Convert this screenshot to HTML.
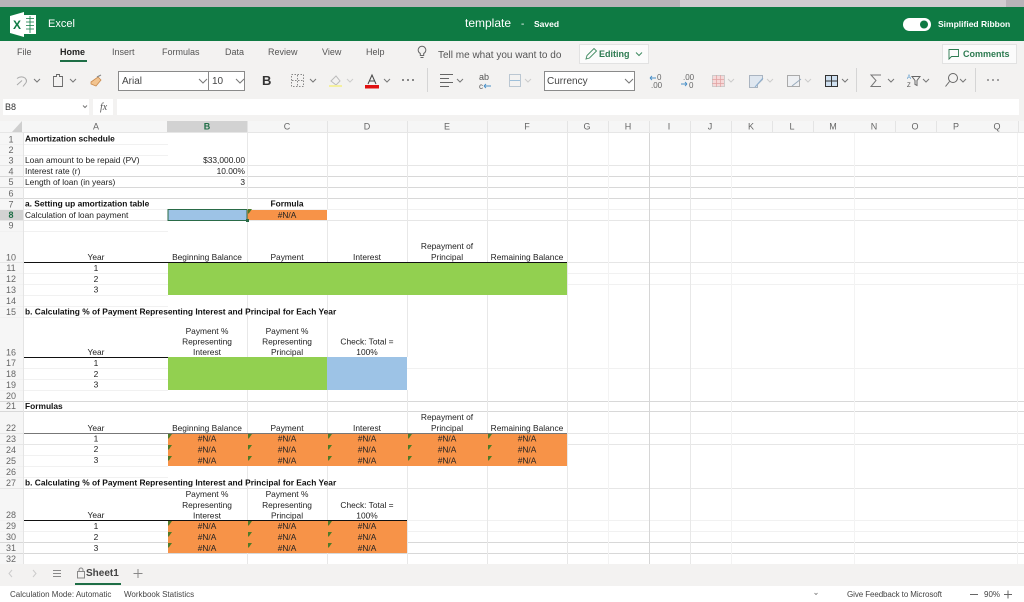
<!DOCTYPE html>
<html><head><meta charset="utf-8"><title>Excel</title>
<style>
html,body{margin:0;padding:0;background:#fff;overflow:hidden}
svg{display:block;position:absolute;left:0;top:0;filter:blur(.3px)}
text{font-family:"Liberation Sans",sans-serif}
.c{font-size:8.4px;fill:#222}
.m{text-anchor:middle}
.r{text-anchor:end}
.b{font-weight:bold;fill:#111}
.h{font-size:9px;fill:#666;text-anchor:middle}
.ic{fill:none;stroke:#666;stroke-width:1}
.ch{fill:none;stroke:#777;stroke-width:1}
</style></head><body>
<svg width="1024" height="602" viewBox="0 0 1024 602" xmlns="http://www.w3.org/2000/svg">
<defs>
<polygon id="t" points="0,0 4,0 0.8,4.5 0,4.5" fill="#4f7a28"/>
</defs>
<rect width="1024" height="602" fill="#fff"/>
<!-- top strip -->
<rect width="1024" height="7" fill="#b8b3b8"/>
<rect x="680" width="326" height="7" fill="#d0ccd0"/>
<!-- title bar -->
<rect y="7" width="1024" height="34" fill="#0e7a43"/>
<polygon points="10,16 24,12 24,37 10,33" fill="#fff"/>
<rect x="24" y="15" width="12" height="19" fill="#fff"/>
<path d="M26 18.500h8M26 22h8M26 25.500h8M26 29h8M30 16v17" stroke="#0e7a43" stroke-width=".8" fill="none"/>
<text x="17" y="29" font-size="12" font-weight="bold" fill="#0e7a43" text-anchor="middle">X</text>
<text x="48" y="27" font-size="11" fill="#fff">Excel</text>
<text x="465" y="27" font-size="12" fill="#fff">template</text>
<text x="521" y="27" font-size="10" fill="#fff">-</text>
<text x="534" y="27" font-size="8.500" font-weight="bold" fill="#fff">Saved</text>
<rect x="903" y="18" width="28" height="13" rx="6.500" fill="#fff"/>
<circle cx="924" cy="24.500" r="4" fill="#0e7a43"/>
<text x="938" y="27" font-size="8.500" font-weight="bold" fill="#fff">Simplified Ribbon</text>
<!-- ribbon -->
<rect y="41" width="1024" height="80" fill="#f3f2f1"/>
<g font-size="9" fill="#555">
<text x="17" y="55">File</text>
<text x="60" y="55" fill="#222" font-weight="bold">Home</text>
<text x="112" y="55">Insert</text>
<text x="162" y="55">Formulas</text>
<text x="225" y="55">Data</text>
<text x="268" y="55">Review</text>
<text x="322" y="55">View</text>
<text x="366" y="55">Help</text>
<text x="438" y="58" font-size="10">Tell me what you want to do</text>
</g>
<rect x="60" y="60" width="27" height="2" fill="#1e6e46"/>
<path d="M425.700 55.500a3.800 3.800 0 1 0-3.400 0v2h3.400zM422.500 59.500h3" class="ic" stroke-width=".8" transform="translate(-2,-2)"/>
<!-- editing -->
<rect x="579.500" y="44.500" width="69" height="19" fill="#fbfbfb" stroke="#e2e2e2"/>
<path d="M586 59l1-3.500 7-7 2.500 2.500-7 7z" fill="none" stroke="#3f8a60" stroke-width=".9"/>
<text x="599" y="57" font-size="9" font-weight="bold" fill="#2c7a50">Editing</text>
<path d="M636 52.500l3 3 3-3" fill="none" stroke="#3f8a60"/>
<!-- comments -->
<rect x="942.500" y="44.500" width="74" height="19" fill="#fbfbfb" stroke="#e2e2e2"/>
<path d="M949 49.500h9.500v7h-7l-2.500 2.500z" fill="none" stroke="#2c7a50" stroke-width=".9"/>
<text x="963" y="57" font-size="9" font-weight="bold" fill="#2c7a50">Comments</text>
<!-- toolbar icons left -->
<path d="M17 85l5-4.500M17 78.500q4-3 8-.5q3 3 0 6l-2 2.500" fill="none" stroke="#aaa" stroke-width="1"/>
<path d="M34 79l3 3 3-3M70 79l3 3 3-3" class="ch"/>
<path d="M53.500 76.500h3v-2h3v2h3v10h-9z" fill="none" stroke="#666" stroke-width=".9"/>
<path d="M91 82l7-5 3 3-5 6-5-2z" fill="#f3c48f" stroke="#c98a4e" stroke-width=".8"/>
<path d="M97 77l4-2" stroke="#888" stroke-width="1.200"/>
<!-- font select -->
<rect x="118.500" y="71.500" width="126" height="19" fill="#fff" stroke="#8a8a8a"/>
<line x1="208.500" y1="71" x2="208.500" y2="91" stroke="#8a8a8a"/>
<text x="122" y="84" font-size="10" fill="#444">Arial</text>
<text x="212" y="84" font-size="10" fill="#444">10</text>
<path d="M199 79l4 4 4-4M236 79l4 4 4-4" class="ch"/>
<text x="262" y="85" font-size="13" font-weight="bold" fill="#333">B</text>
<rect x="291.500" y="74.500" width="12" height="12" fill="none" stroke="#888" stroke-dasharray="1.500 1.500"/>
<path d="M297.500 75v12M292 80.500h12" stroke="#888" stroke-dasharray="1.500 1.500"/>
<path d="M310 79l3 3 3-3" class="ch"/>
<path d="M331 81l5-5 4 5-4 4z" fill="none" stroke="#bbb"/>
<rect x="329" y="85" width="13" height="2" fill="#f4f0a0"/>
<path d="M347 79l3 3 3-3" fill="none" stroke="#ccc"/>
<path d="M368 84l4-9 4 9M369.500 81h5" fill="none" stroke="#444"/>
<rect x="365" y="85" width="14" height="3.500" fill="#e01010"/>
<path d="M384 79l3 3 3-3" class="ch"/>
<circle cx="403" cy="80" r="1" fill="#666"/><circle cx="408" cy="80" r="1" fill="#666"/><circle cx="413" cy="80" r="1" fill="#666"/>
<line x1="427.500" y1="68" x2="427.500" y2="92" stroke="#d5d5d5"/>
<path d="M440 74.500h13M440 78.500h9M440 82.500h13M440 86.500h9" stroke="#666"/>
<path d="M457 79l3 3 3-3" class="ch"/>
<text x="479" y="80" font-size="9" fill="#555">ab</text>
<text x="479" y="89" font-size="8" fill="#555">c</text>
<path d="M484 86h7M484 86l2-2M484 86l2 2" stroke="#4a90c8" fill="none" stroke-width=".9"/>
<rect x="509.500" y="74.500" width="11" height="12" fill="none" stroke="#bbc7d2"/>
<path d="M510 80.500h10" stroke="#9fc0da"/>
<path d="M525 79l3 3 3-3" fill="none" stroke="#ccc"/>
<!-- number format -->
<rect x="544.500" y="71.500" width="90" height="19" fill="#fff" stroke="#8a8a8a"/>
<text x="547" y="84" font-size="10" fill="#444">Currency</text>
<path d="M625 79l4 4 4-4" class="ch"/>
<text x="657" y="80" font-size="8" fill="#666">0</text>
<path d="M650 78h6M650 78l2-2M650 78l2 2" stroke="#4a90c8" fill="none" stroke-width=".9"/>
<text x="651" y="88" font-size="8" fill="#666">.00</text>
<text x="683" y="80" font-size="8" fill="#666">.00</text>
<path d="M681 84h6M687 84l-2-2M687 84l-2 2" stroke="#4a90c8" fill="none" stroke-width=".9"/>
<text x="689" y="88" font-size="8" fill="#666">0</text>
<rect x="712.500" y="75.500" width="12" height="11" fill="#f6d8d8" stroke="#ccc"/>
<path d="M716.500 75v12M720.500 75v12M712 79.500h12M712 83.500h12" stroke="#e0a0a0" stroke-width=".7"/>
<path d="M728 79l3 3 3-3" fill="none" stroke="#ccc"/>
<path d="M749.500 75.500h13v4l-5 5v3h-8z" fill="#dfe7f0" stroke="#aab4c0"/>
<path d="M755 87l8-9" stroke="#8fb0d0"/>
<path d="M767 79l3 3 3-3" fill="none" stroke="#ccc"/>
<rect x="787.500" y="75.500" width="12" height="11" fill="#eef0f3" stroke="#aaa"/>
<path d="M792 86l9-7" stroke="#9ab" fill="none"/>
<path d="M805 79l3 3 3-3" fill="none" stroke="#ccc"/>
<rect x="825.500" y="75.500" width="12" height="11" fill="#cfe0f0" stroke="#333"/>
<path d="M831.500 75v12M825 81h13" stroke="#333"/>
<path d="M842 79l3 3 3-3" class="ch"/>
<line x1="856.500" y1="68" x2="856.500" y2="92" stroke="#d5d5d5"/>
<path d="M881 75h-10l5 5.500-5 6h10" fill="none" stroke="#777"/>
<path d="M888 79l3 3 3-3" class="ch"/>
<text x="907" y="79" font-size="6" fill="#4a90c8">A</text>
<text x="907" y="87" font-size="6" fill="#444">Z</text>
<path d="M912 76.500h8l-3 4v5l-2-1v-4z" fill="none" stroke="#666"/>
<path d="M923 79l3 3 3-3" class="ch"/>
<circle cx="953" cy="78" r="4.500" class="ic"/>
<path d="M949.500 81.500l-4 5" stroke="#666"/>
<path d="M960 79l3 3 3-3" class="ch"/>
<line x1="975.500" y1="68" x2="975.500" y2="92" stroke="#d5d5d5"/>
<circle cx="988" cy="80" r=".9" fill="#666"/><circle cx="993" cy="80" r=".9" fill="#666"/><circle cx="998" cy="80" r=".9" fill="#666"/>
<!-- formula bar -->
<rect x="3" y="99" width="86" height="16" fill="#fff"/>
<text x="5" y="110" font-size="9" fill="#333">B8</text>
<path d="M83 105.500l2 2 2-2" class="ch" stroke-width=".8"/>
<rect x="93" y="99" width="20" height="16" fill="#fff"/>
<text x="100" y="110" font-size="10" font-style="italic" fill="#555" style="font-family:'Liberation Serif',serif">fx</text>
<rect x="117" y="99" width="902" height="16" fill="#fff"/>
<!-- column headers -->
<rect y="121" width="1024" height="12" fill="#f6f6f6"/>
<rect x="167" y="121" width="80" height="12" fill="#d2d2d2"/>
<rect x="167" y="132" width="80" height="1" fill="#1e6e46"/>
<polygon points="22,121 22,132 12,132" fill="#cfcfcf"/>
<path d="M247.500 121V133M327.500 121V133M407.500 121V133M487.500 121V133M567.500 121V133M608.500 121V133M649.500 121V133M690.500 121V133M731.500 121V133M772.500 121V133M813.500 121V133M895.500 121V133M936.500 121V133M1018.500 121V133" stroke="#e4e4e4"/>
<!-- row header bg -->
<rect y="133" width="24" height="431" fill="#f6f6f6"/>
<rect y="209" width="24" height="11" fill="#d2d2d2"/>
<rect x="23" y="209" width="1" height="11" fill="#1e6e46"/>
<!-- fills -->
<rect x="168" y="262" width="399" height="33" fill="#92d050"/>
<rect x="168" y="357" width="159" height="33" fill="#92d050"/>
<rect x="327" y="357" width="80" height="33" fill="#9dc3e6"/>
<rect x="247" y="209" width="80" height="11" fill="#f79348"/>
<rect x="168" y="433" width="399" height="33" fill="#f79348"/>
<rect x="168" y="520" width="239" height="33" fill="#f79348"/>
<!-- grid -->
<g fill="none" stroke-width="1">
<g stroke="#d8d8d8">
<path d="M0 176.500H1024M0 187.500H1024M0 198.500H1024M0 542.500H168M407 542.500H1024M0 553.500H1024M0 401.500H1024M0 411.500H1024"/>
</g>
<g stroke="#e6e6e6">
<path d="M0 220.500H1024M0 262.500H168M567 262.500H1024M0 433.500H168M567 433.500H1024M0 444.500H168M567 444.500H1024M0 488.500H1024M0 165.500H1024"/>
</g>
<g stroke="#f1f1f1">
<path d="M0 209.500H1024M0 273.500H168M567 273.500H1024M0 284.500H168M567 284.500H1024M0 368.500H168M407 368.500H1024M0 520.500H168M407 520.500H1024M0 531.500H168M407 531.500H1024M0 295.500H168M0 379.500H168M0 455.500H168M0 466.500H168M0 477.500H168M0 144.500H168M0 155.500H168M0 231.500H168M0 306.500H168M0 317.500H168M0 390.500H168"/>
</g>
<path d="M247.500 133V209M247.500 220V262M247.500 295V357M247.500 390V433M247.500 466V520M247.500 553V564M327.500 133V209M327.500 220V262M327.500 295V357M327.500 390V433M327.500 466V520M327.500 553V564M407.500 133V262M407.500 295V357M407.500 390V433M407.500 466V564M487.500 133V262M487.500 295V433M487.500 466V564M567.500 133V564M690.500 133V564" stroke="#e8e8e8"/>
<path d="M649.500 133V564" stroke="#d6d6d6"/>
<path d="M608.500 133V564M731.500 133V564M854.500 133V564M1017.500 133V564" stroke="#f3f3f3"/>
<path d="M0 132.500H1024" stroke="#e6e6e6"/>
<path d="M23.500 133V564" stroke="#e4e4e4"/>
</g>
<!-- black rules -->
<path d="M24 262.500H567M24 357.500H168M24 520.500H407" stroke="#111" stroke-width="1"/>
<path d="M24 433.500H567" stroke="#777" stroke-width="1"/>
<!-- selected cell -->
<rect x="168" y="209.500" width="79" height="11" fill="#9dc3e6" stroke="#2a6b47" stroke-width="1"/>
<rect x="246" y="219" width="3" height="3" fill="#2a6b47"/>
<use href="#t" x="248" y="209"/>
<!-- col labels -->
<g>
<text class="h" x="96" y="129.500">A</text><text class="h b" x="207" y="129.500" style="fill:#1e6e46">B</text><text class="h" x="287" y="129.500">C</text><text class="h" x="367" y="129.500">D</text><text class="h" x="447" y="129.500">E</text><text class="h" x="527" y="129.500">F</text><text class="h" x="587" y="129.500">G</text><text class="h" x="628" y="129.500">H</text><text class="h" x="669" y="129.500">I</text><text class="h" x="710" y="129.500">J</text><text class="h" x="751" y="129.500">K</text><text class="h" x="792" y="129.500">L</text><text class="h" x="833" y="129.500">M</text><text class="h" x="874" y="129.500">N</text><text class="h" x="915" y="129.500">O</text><text class="h" x="956" y="129.500">P</text><text class="h" x="997" y="129.500">Q</text>
</g>
<!-- row labels -->
<g>
<text class="h" x="11" y="142.500">1</text><text class="h" x="11" y="153">2</text><text class="h" x="11" y="163.500">3</text><text class="h" x="11" y="174.500">4</text><text class="h" x="11" y="185">5</text><text class="h" x="11" y="196.500">6</text><text class="h" x="11" y="207.500">7</text><text class="h b" x="11" y="218" style="fill:#1e6e46">8</text><text class="h" x="11" y="228.500">9</text><text class="h" x="11" y="260.500">10</text><text class="h" x="11" y="271">11</text><text class="h" x="11" y="282">12</text><text class="h" x="11" y="293">13</text><text class="h" x="11" y="304">14</text><text class="h" x="11" y="315">15</text><text class="h" x="11" y="355.500">16</text><text class="h" x="11" y="366">17</text><text class="h" x="11" y="377">18</text><text class="h" x="11" y="388">19</text><text class="h" x="11" y="399">20</text><text class="h" x="11" y="409">21</text><text class="h" x="11" y="431">22</text><text class="h" x="11" y="442">23</text><text class="h" x="11" y="453">24</text><text class="h" x="11" y="464">25</text><text class="h" x="11" y="475">26</text><text class="h" x="11" y="486">27</text><text class="h" x="11" y="518">28</text><text class="h" x="11" y="529">29</text><text class="h" x="11" y="540">30</text><text class="h" x="11" y="551">31</text><text class="h" x="11" y="562">32</text>
</g>
<!-- cells -->
<g>
<text class="c b" x="25" y="141.500">Amortization schedule</text>
<text class="c" x="25" y="163">Loan amount to be repaid (PV)</text>
<text class="c r" x="245" y="163">$33,000.00</text>
<text class="c" x="25" y="174">Interest rate  (r)</text>
<text class="c r" x="245" y="174">10.00%</text>
<text class="c" x="25" y="185">Length of loan (in years)</text>
<text class="c r" x="245" y="185">3</text>
<text class="c b" x="25" y="206.500">a.  Setting up amortization table</text>
<text class="c b m" x="287" y="206.500">Formula</text>
<text class="c" x="25" y="218">Calculation of loan payment</text>
<text class="c m" x="287" y="218">#N/A</text>

<text class="c m" x="447" y="249">Repayment of</text>
<text class="c m" x="96" y="260">Year</text><text class="c m" x="207" y="260">Beginning Balance</text><text class="c m" x="287" y="260">Payment</text><text class="c m" x="367" y="260">Interest</text><text class="c m" x="447" y="260">Principal</text><text class="c m" x="527" y="260">Remaining Balance</text>
<text class="c m" x="96" y="271">1</text><text class="c m" x="96" y="282">2</text><text class="c m" x="96" y="292.500">3</text>
<text class="c b" x="25" y="314.500">b.  Calculating % of Payment Representing Interest and Principal for Each Year</text>

<text class="c m" x="207" y="334">Payment %</text><text class="c m" x="287" y="334">Payment %</text>
<text class="c m" x="207" y="344.500">Representing</text><text class="c m" x="287" y="344.500">Representing</text><text class="c m" x="367" y="344.500">Check:  Total =</text>
<text class="c m" x="96" y="355">Year</text><text class="c m" x="207" y="355">Interest</text><text class="c m" x="287" y="355">Principal</text><text class="c m" x="367" y="355">100%</text>
<text class="c m" x="96" y="366">1</text><text class="c m" x="96" y="377">2</text><text class="c m" x="96" y="387.500">3</text>
<text class="c b" x="25" y="409">Formulas</text>

<text class="c m" x="447" y="420">Repayment of</text>
<text class="c m" x="96" y="431">Year</text><text class="c m" x="207" y="431">Beginning Balance</text><text class="c m" x="287" y="431">Payment</text><text class="c m" x="367" y="431">Interest</text><text class="c m" x="447" y="431">Principal</text><text class="c m" x="527" y="431">Remaining Balance</text>
<text class="c m" x="96" y="441.500">1</text><text class="c m" x="96" y="452">2</text><text class="c m" x="96" y="463">3</text>
<text class="c m" x="207" y="441.500">#N/A</text><text class="c m" x="287" y="441.500">#N/A</text><text class="c m" x="367" y="441.500">#N/A</text><text class="c m" x="447" y="441.500">#N/A</text><text class="c m" x="527" y="441.500">#N/A</text>
<text class="c m" x="207" y="452.500">#N/A</text><text class="c m" x="287" y="452.500">#N/A</text><text class="c m" x="367" y="452.500">#N/A</text><text class="c m" x="447" y="452.500">#N/A</text><text class="c m" x="527" y="452.500">#N/A</text>
<text class="c m" x="207" y="463.500">#N/A</text><text class="c m" x="287" y="463.500">#N/A</text><text class="c m" x="367" y="463.500">#N/A</text><text class="c m" x="447" y="463.500">#N/A</text><text class="c m" x="527" y="463.500">#N/A</text>
<text class="c b" x="25" y="485.500">b.  Calculating % of Payment Representing Interest and Principal for Each Year</text>

<text class="c m" x="207" y="497">Payment %</text><text class="c m" x="287" y="497">Payment %</text>
<text class="c m" x="207" y="508">Representing</text><text class="c m" x="287" y="508">Representing</text><text class="c m" x="367" y="508">Check:  Total =</text>
<text class="c m" x="96" y="518">Year</text><text class="c m" x="207" y="518.500">Interest</text><text class="c m" x="287" y="518.500">Principal</text><text class="c m" x="367" y="518.500">100%</text>
<text class="c m" x="96" y="529">1</text><text class="c m" x="96" y="540">2</text><text class="c m" x="96" y="551">3</text>
<text class="c m" x="207" y="529">#N/A</text><text class="c m" x="287" y="529">#N/A</text><text class="c m" x="367" y="529">#N/A</text>
<text class="c m" x="207" y="540">#N/A</text><text class="c m" x="287" y="540">#N/A</text><text class="c m" x="367" y="540">#N/A</text>
<text class="c m" x="207" y="551">#N/A</text><text class="c m" x="287" y="551">#N/A</text><text class="c m" x="367" y="551">#N/A</text>
</g>
<!-- triangles -->
<g>
<use href="#t" x="168" y="434"/><use href="#t" x="248" y="434"/><use href="#t" x="328" y="434"/><use href="#t" x="408" y="434"/><use href="#t" x="488" y="434"/>
<use href="#t" x="168" y="445"/><use href="#t" x="248" y="445"/><use href="#t" x="328" y="445"/><use href="#t" x="408" y="445"/><use href="#t" x="488" y="445"/>
<use href="#t" x="168" y="456"/><use href="#t" x="248" y="456"/><use href="#t" x="328" y="456"/><use href="#t" x="408" y="456"/><use href="#t" x="488" y="456"/>
<use href="#t" x="168" y="521"/><use href="#t" x="248" y="521"/><use href="#t" x="328" y="521"/>
<use href="#t" x="168" y="532"/><use href="#t" x="248" y="532"/><use href="#t" x="328" y="532"/>
<use href="#t" x="168" y="543"/><use href="#t" x="248" y="543"/><use href="#t" x="328" y="543"/>
</g>
<!-- sheet tabs -->
<rect y="564" width="1024" height="22" fill="#f3f2f1"/>
<path d="M12 570l-3 3.500 3 3.500M33 570l3 3.500-3 3.500" fill="none" stroke="#ccc"/>
<path d="M53 570.500h8M53 573.500h8M53 576.500h8" stroke="#888"/>
<rect x="77.500" y="571.500" width="7" height="6.500" fill="none" stroke="#888"/>
<path d="M79 571.500v-1.500a2 2 0 0 1 4 0v1.500" fill="none" stroke="#888"/>
<text x="86" y="576" font-size="10" font-weight="bold" fill="#444">Sheet1</text>
<rect x="75" y="583" width="46" height="2" fill="#1e6e46"/>
<path d="M138 569v9M133.500 573.500h9" stroke="#888"/>
<!-- status -->
<rect y="586" width="1024" height="16" fill="#fff"/>
<g font-size="8" fill="#444">
<text x="10" y="597">Calculation Mode: Automatic</text>
<text x="124" y="597">Workbook Statistics</text>
<text x="847" y="597" textLength="95">Give Feedback to Microsoft</text>
<text x="984" y="597">90%</text>
</g>
<path d="M814.500 593l1.500 1.500 1.500-1.500" fill="none" stroke="#777" stroke-width=".8"/>
<path d="M970 594.500h8M1004 594.500h8M1008 590.500v8" stroke="#666"/>
</svg>
</body></html>
